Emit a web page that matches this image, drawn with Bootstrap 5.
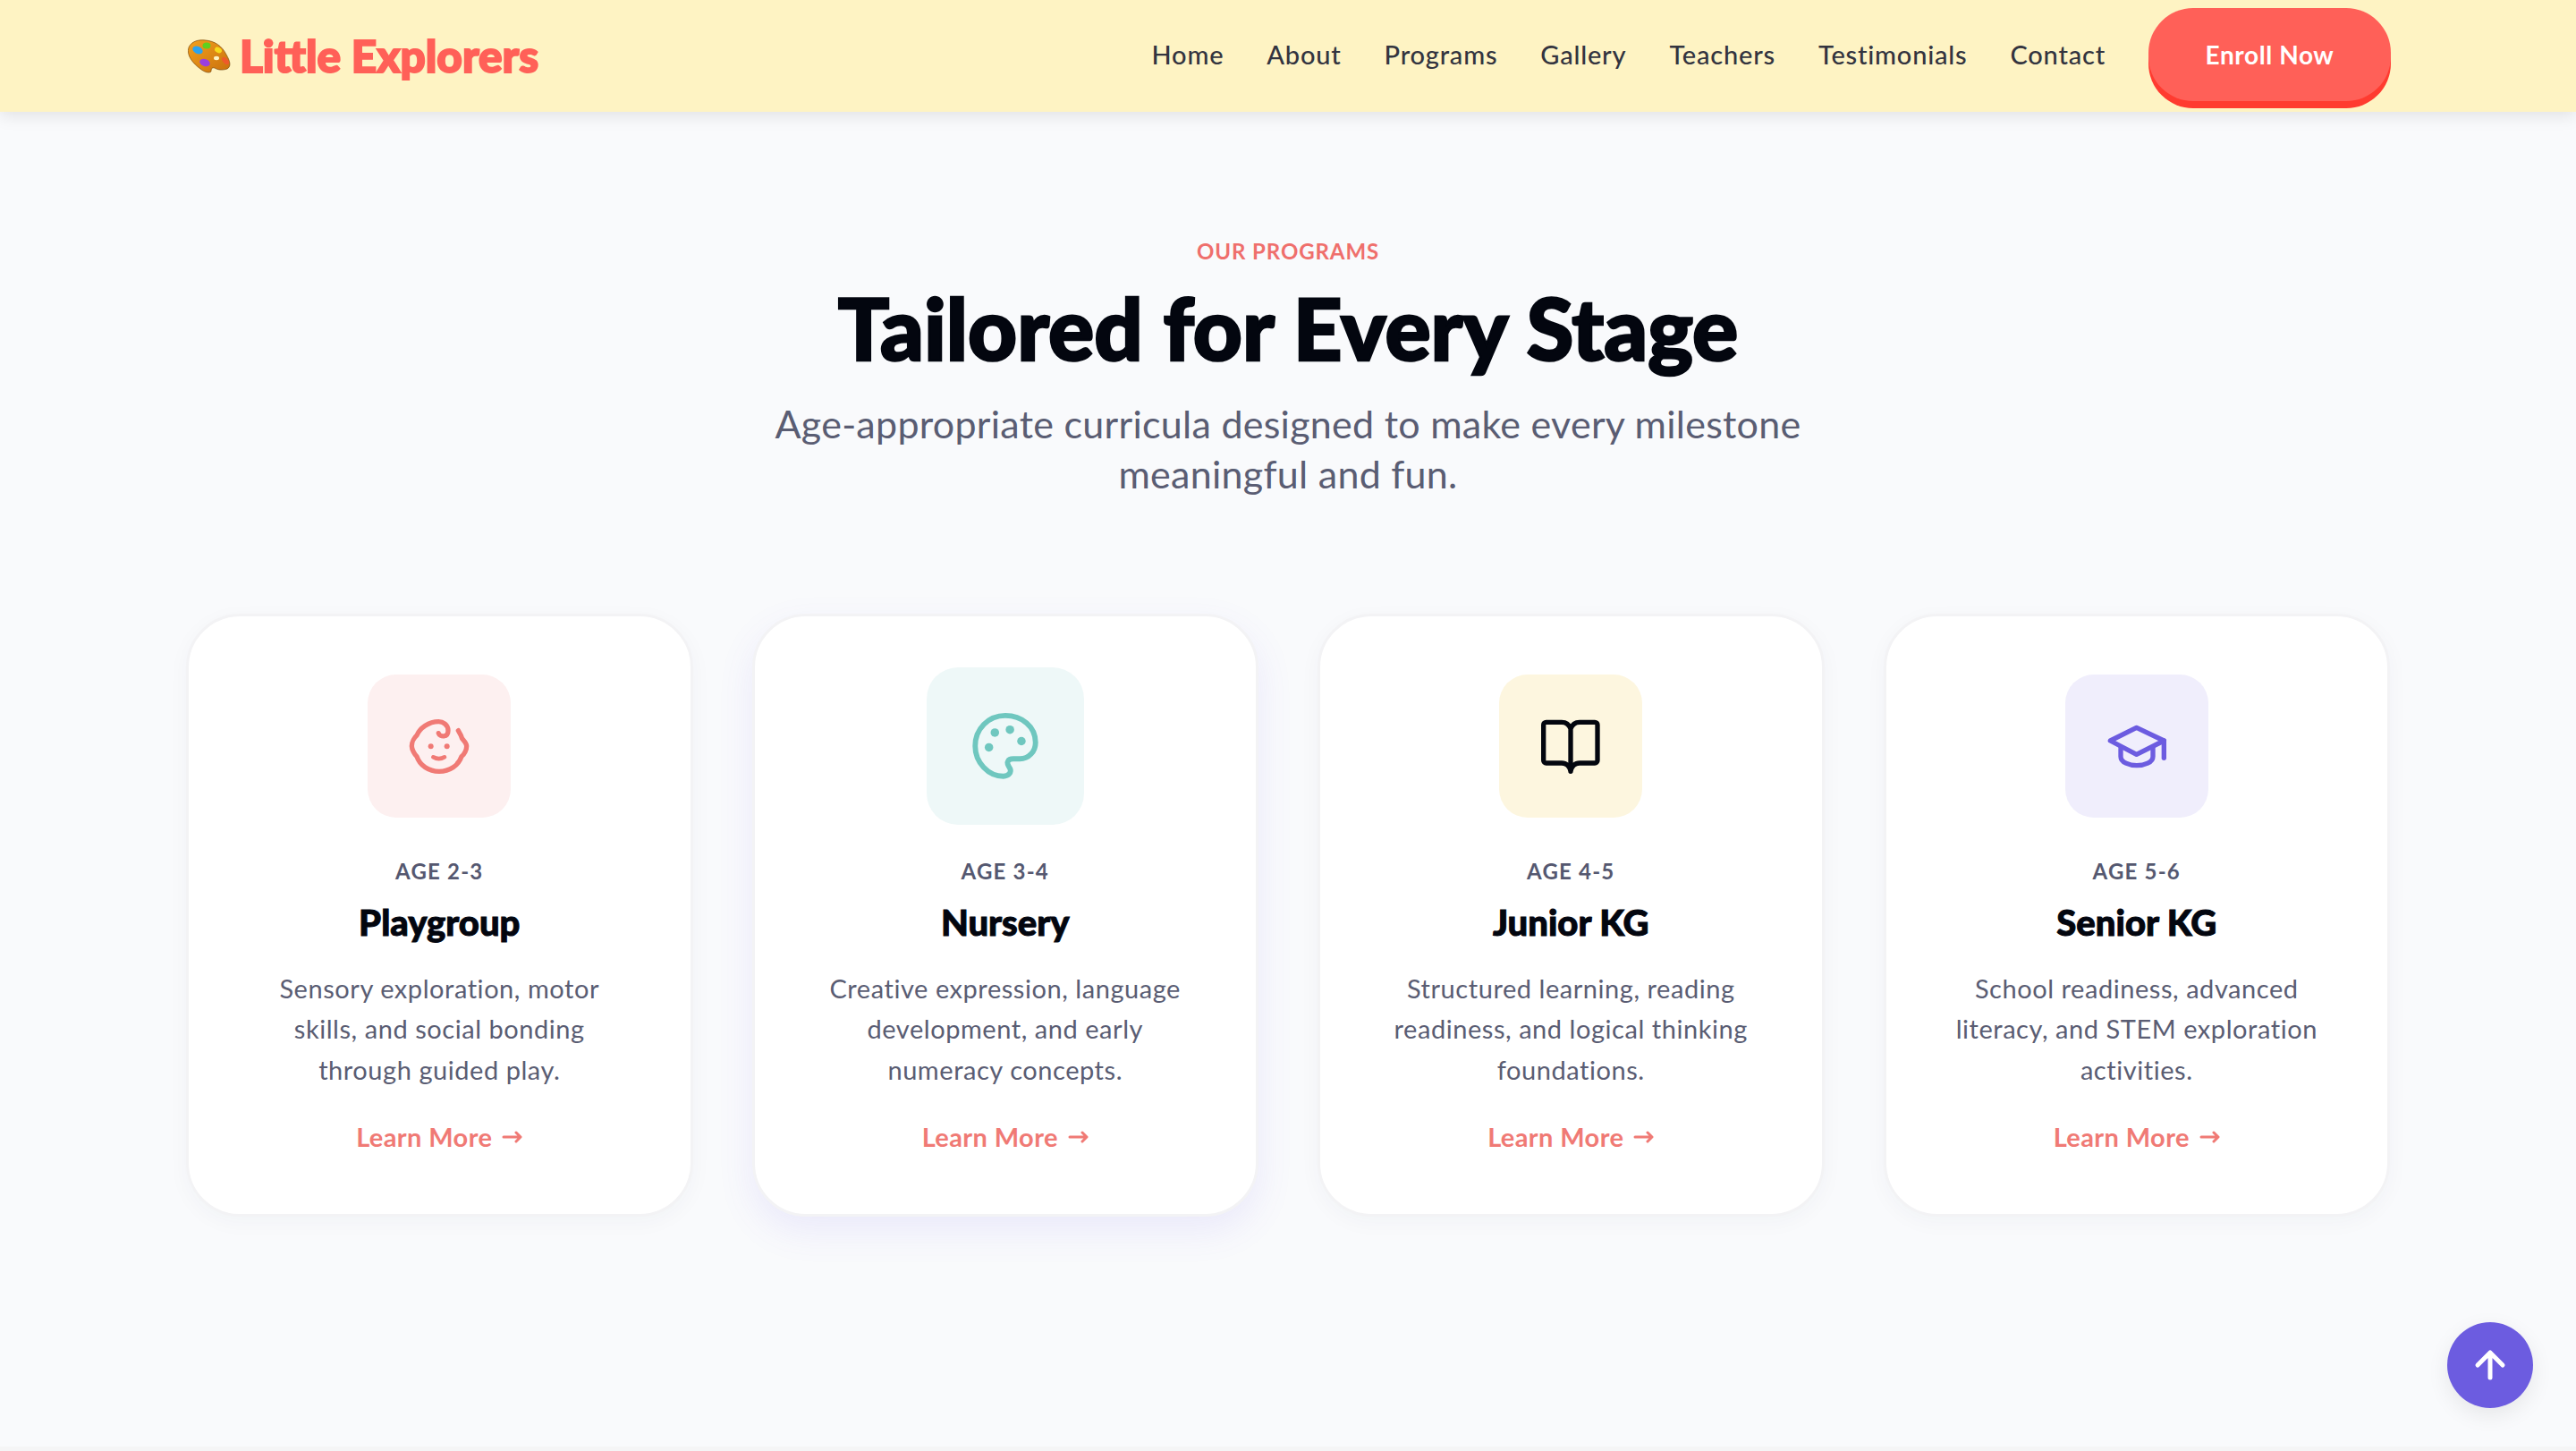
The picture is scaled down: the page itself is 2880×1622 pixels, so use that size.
<!DOCTYPE html>
<html lang="en">
<head>
  <meta charset="UTF-8" />
  <title>Little Explorers</title>
  <link href="https://cdn.jsdelivr.net/npm/bootstrap@5.3.0/dist/css/bootstrap.min.css" rel="stylesheet">
  <style>
    body { background: #f9fafc; font-family: "Lato", "Noto Sans", sans-serif; color: #4a4e69; height: 1622px; overflow: hidden; }
    .top-bar { background: #fef3c3; height: 125px; padding: 0 207px 0 210px; box-shadow: 0 4px 18px rgba(0,0,0,.1); }
    .brand-logo { font-family: "Lato", sans-serif; font-weight: 900; font-size: 49.5px; color: #ff6058; -webkit-text-stroke: 2px #ff6058; gap: 10px; text-decoration: none; line-height: 1; }
    .nav-row { gap: 48px; padding-bottom: 3px; }
    .nav-item-link { font-size: 29px; font-weight: 500; color: #33343f; text-decoration: none; letter-spacing: .8px; }
    .enroll-btn { background: #ff6058; color: #fff; font-size: 28px; font-weight: 700; letter-spacing: .6px; border: 0; width: 271px; height: 104px; border-radius: 50px; box-shadow: 0 8px 0 #ff3b30; }
    .eyebrow { color: #ef6f6c; font-size: 24px; font-weight: 700; letter-spacing: .9px; line-height: 1; padding-top: 144px; }
    .main-heading { font-family: "Lato", sans-serif; font-weight: 900; font-size: 95.5px; color: #03060f; -webkit-text-stroke: 2.5px #03060f; line-height: 1; margin: 26px 0 0; }
    .sub-heading { font-size: 43px; line-height: 56px; letter-spacing: .27px; color: #5a5d73; margin: 31px 0 0; }
    .programs { padding: 0 208px; margin-top: 128px; }
    .programs .row { --bs-gutter-x: 66px; }
    .program-card { height: 674px; border: 3px solid #f3f3f5; border-radius: 60px; background: #fff; box-shadow: 0 6px 24px rgba(40,50,90,.035); padding-top: 65px; }
    .program-card.is-hover { box-shadow: 0 16px 40px rgba(108,92,231,.1); }
    .icon-box { width: 160px; height: 160px; border-radius: 32px; margin: 0 auto; }
    .is-hover .icon-box { transform: scale(1.1); }
    .tint-coral { background: #fdf0f0; color: #f07a75; }
    .tint-teal { background: #eef8f8; color: #6fc7bf; }
    .tint-yellow { background: #fdf6df; color: #03060f; }
    .tint-purple { background: #f0eefc; color: #6c5ce0; }
    .icon-box svg { width: 80px; height: 80px; fill: none; stroke: currentColor; stroke-width: 16; stroke-linecap: round; stroke-linejoin: round; }
    .icon-box svg .dot { fill: currentColor; stroke: none; }
    .age-label { font-size: 24px; font-weight: 700; letter-spacing: 1.2px; color: #555870; line-height: 1; margin-top: 48px; }
    .program-name { font-family: "Lato", sans-serif; font-weight: 900; font-size: 40px; color: #03060f; -webkit-text-stroke: 1px #03060f; line-height: 1; margin: 25px 0 0; }
    .program-text { font-size: 29px; line-height: 45.5px; letter-spacing: .55px; color: #5a5d73; margin: 31px 0 0; }
    .learn-link { font-size: 29px; font-weight: 700; letter-spacing: .4px; color: #f07a75; text-decoration: none; margin-top: 31px; gap: 11px; }
    .learn-link svg { width: 23px; height: 16px; fill: none; stroke: currentColor; stroke-width: 3; stroke-linecap: round; stroke-linejoin: round; }
    .next-strip { position: fixed; left: 0; right: 0; bottom: 0; height: 5px; background: #f5f5f6; }
    .to-top { position: fixed; right: 48px; bottom: 48px; width: 96px; height: 96px; background: #6c5ce0; box-shadow: 0 8px 24px rgba(0,0,0,.08); }
    .to-top svg { width: 48px; height: 48px; fill: none; stroke: #fff; stroke-width: 5; stroke-linecap: round; stroke-linejoin: round; }
  </style>
</head>
<body>
  <!-- Top navigation -->
  <nav class="top-bar d-flex align-items-center justify-content-between">
    <a href="#" class="brand-logo d-flex align-items-center">
      <svg width="48" height="38" viewBox="0 0 48 38">
        <defs><linearGradient id="wood" x1="0" y1="0" x2="1" y2="1"><stop offset="0" stop-color="#f2a01e"/><stop offset="1" stop-color="#c9700c"/></linearGradient></defs>
        <path d="M1 9C4 2 12 0 20 1C30 2 38 7 43 17C47 24 49 30 44 33C38 35 33 34 30 32C27 31 26 33 26 36C24 38 19 37 14 33C6 27-2 18 1 9Z" fill="url(#wood)" stroke="#6b3b05" stroke-width=".6"/>
        <ellipse cx="11" cy="12" rx="6" ry="4" fill="#2aa3f0" transform="rotate(25 11 12)"/>
        <ellipse cx="21" cy="7" rx="4.5" ry="3.6" fill="#5fd01e"/>
        <ellipse cx="34" cy="12" rx="4.2" ry="3" fill="#f6d91c" transform="rotate(30 34 12)"/>
        <ellipse cx="32" cy="21" rx="3" ry="2.2" fill="#fdf3c3"/>
        <ellipse cx="42" cy="24" rx="5" ry="2.8" fill="#ee5a2a" transform="rotate(45 42 24)"/>
        <ellipse cx="19" cy="26" rx="6" ry="4" fill="#9a3fe0" transform="rotate(20 19 26)"/>
      </svg>
      <span>Little Explorers</span>
    </a>
    <div class="d-flex align-items-center nav-row">
      <a href="#" class="nav-item-link">Home</a>
      <a href="#" class="nav-item-link">About</a>
      <a href="#" class="nav-item-link">Programs</a>
      <a href="#" class="nav-item-link">Gallery</a>
      <a href="#" class="nav-item-link">Teachers</a>
      <a href="#" class="nav-item-link">Testimonials</a>
      <a href="#" class="nav-item-link">Contact</a>
      <button class="btn enroll-btn">Enroll Now</button>
    </div>
  </nav>

  <!-- Section heading -->
  <header class="text-center">
    <div class="eyebrow text-uppercase">Our Programs</div>
    <h1 class="main-heading">Tailored for Every Stage</h1>
    <p class="sub-heading">Age-appropriate curricula designed to make every milestone<br>meaningful and fun.</p>
  </header>

  <!-- Program cards -->
  <section class="programs">
    <div class="row row-cols-4">
      <div class="col">
        <div class="program-card text-center">
          <div class="icon-box tint-coral d-flex align-items-center justify-content-center">
            <svg viewBox="0 0 240 240">
              <path d="M118 77C122 90 150 92 150 68C150 48 132 38 118 38C85 38 55 60 45 84C38 90 28 105 28 120C28 132 38 148 45 155C55 185 85 205 120 205C155 205 185 185 195 155C205 148 212 132 212 120C212 110 205 105 197 95C195 88 190 78 184 68"/>
              <circle class="dot" cx="92" cy="121" r="9"/><circle class="dot" cx="146" cy="121" r="9"/>
              <path d="M100 157Q119 168 138 157" stroke-width="14"/>
            </svg>
          </div>
          <div class="age-label">AGE 2-3</div>
          <h3 class="program-name">Playgroup</h3>
          <p class="program-text">Sensory exploration, motor<br>skills, and social bonding<br>through guided play.</p>
          <a href="#" class="learn-link d-inline-flex align-items-center">Learn More <svg viewBox="0 0 23 16"><path d="M2 8H21M16 3L21 8L16 13"/></svg></a>
        </div>
      </div>
      <div class="col">
        <div class="program-card is-hover text-center">
          <div class="icon-box tint-teal d-flex align-items-center justify-content-center">
            <svg viewBox="0 0 240 240">
              <path d="M212 109C212 60 170 27 120 27C68 27 28 68 28 120C28 170 68 212 114 212C130 212 140 200 134 188C128 178 124 172 128 166C131 160 138 159 144 159L164 159C192 159 212 136 212 109Z"/>
              <circle class="dot" cx="88" cy="79" r="13"/><circle class="dot" cx="134" cy="70" r="13"/><circle class="dot" cx="169" cy="105" r="13"/><circle class="dot" cx="70" cy="124" r="13"/>
            </svg>
          </div>
          <div class="age-label">AGE 3-4</div>
          <h3 class="program-name">Nursery</h3>
          <p class="program-text">Creative expression, language<br>development, and early<br>numeracy concepts.</p>
          <a href="#" class="learn-link d-inline-flex align-items-center">Learn More <svg viewBox="0 0 23 16"><path d="M2 8H21M16 3L21 8L16 13"/></svg></a>
        </div>
      </div>
      <div class="col">
        <div class="program-card text-center">
          <div class="icon-box tint-yellow d-flex align-items-center justify-content-center">
            <svg viewBox="0 0 240 240">
              <path d="M120 62C115 48 105 40 90 40H38C33 40 29 44 29 49V168C29 173 33 177 38 177H90C105 177 117 188 120 205C123 188 135 177 150 177H201C206 177 210 173 210 168V49C210 44 206 40 201 40H150C135 40 125 48 120 62V205"/>
            </svg>
          </div>
          <div class="age-label">AGE 4-5</div>
          <h3 class="program-name">Junior KG</h3>
          <p class="program-text">Structured learning, reading<br>readiness, and logical thinking<br>foundations.</p>
          <a href="#" class="learn-link d-inline-flex align-items-center">Learn More <svg viewBox="0 0 23 16"><path d="M2 8H21M16 3L21 8L16 13"/></svg></a>
        </div>
      </div>
      <div class="col">
        <div class="program-card text-center">
          <div class="icon-box tint-purple d-flex align-items-center justify-content-center">
            <svg viewBox="0 0 240 240">
              <path d="M31 102L119 58L211 102L119 148Z"/>
              <path d="M66 128V155C66 175 95 185 120 185C145 185 174 175 174 155V125"/>
              <path d="M211 102V160"/>
            </svg>
          </div>
          <div class="age-label">AGE 5-6</div>
          <h3 class="program-name">Senior KG</h3>
          <p class="program-text">School readiness, advanced<br>literacy, and STEM exploration<br>activities.</p>
          <a href="#" class="learn-link d-inline-flex align-items-center">Learn More <svg viewBox="0 0 23 16"><path d="M2 8H21M16 3L21 8L16 13"/></svg></a>
        </div>
      </div>
    </div>
  </section>

  <div class="next-strip"></div>
  <a href="#" class="to-top rounded-circle d-flex align-items-center justify-content-center">
    <svg viewBox="0 0 48 48"><path d="M24 38V10M10 24L24 10L38 24"/></svg>
  </a>
</body>
</html>
